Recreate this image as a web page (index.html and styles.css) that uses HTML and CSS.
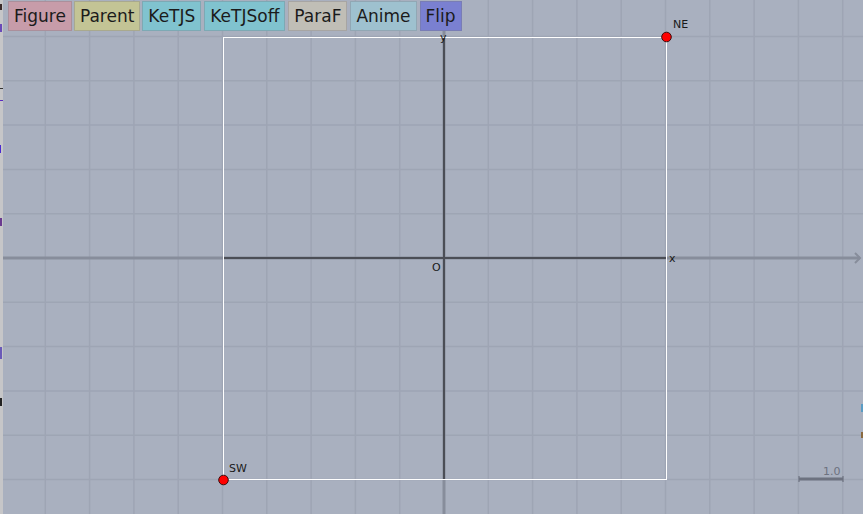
FILE: index.html
```html
<!DOCTYPE html>
<html>
<head>
<meta charset="utf-8">
<link rel="stylesheet" href="styles.css">
</head>
<body>
<div class="page">
  <div class="edge">
    <span class="frag f1"></span>
    <span class="frag f2"></span>
    <span class="frag f3"></span>
    <span class="frag f4"></span>
    <span class="frag f5"></span>
    <span class="frag f6"></span>
    <span class="frag f7"></span>
    <span class="frag f8"></span>
  </div>
  <div class="stage">
    <svg class="board" width="860" height="514" viewBox="3 0 860 514" xmlns="http://www.w3.org/2000/svg">
      <rect x="3" y="0" width="860" height="514" fill="#a9b0bf"/>
      <g stroke="#9ea5b4" stroke-width="1.5">
        <line x1="45.3" y1="0" x2="45.3" y2="514"/>
        <line x1="89.6" y1="0" x2="89.6" y2="514"/>
        <line x1="133.9" y1="0" x2="133.9" y2="514"/>
        <line x1="178.2" y1="0" x2="178.2" y2="514"/>
        <line x1="222.5" y1="0" x2="222.5" y2="514"/>
        <line x1="266.8" y1="0" x2="266.8" y2="514"/>
        <line x1="311.1" y1="0" x2="311.1" y2="514"/>
        <line x1="355.4" y1="0" x2="355.4" y2="514"/>
        <line x1="399.7" y1="0" x2="399.7" y2="514"/>
        <line x1="488.3" y1="0" x2="488.3" y2="514"/>
        <line x1="532.6" y1="0" x2="532.6" y2="514"/>
        <line x1="576.9" y1="0" x2="576.9" y2="514"/>
        <line x1="621.2" y1="0" x2="621.2" y2="514"/>
        <line x1="665.5" y1="0" x2="665.5" y2="514"/>
        <line x1="709.8" y1="0" x2="709.8" y2="514"/>
        <line x1="754.1" y1="0" x2="754.1" y2="514"/>
        <line x1="798.4" y1="0" x2="798.4" y2="514"/>
        <line x1="842.7" y1="0" x2="842.7" y2="514"/>
        <line x1="3" y1="36.5" x2="863" y2="36.5"/>
        <line x1="3" y1="80.8" x2="863" y2="80.8"/>
        <line x1="3" y1="125.1" x2="863" y2="125.1"/>
        <line x1="3" y1="169.4" x2="863" y2="169.4"/>
        <line x1="3" y1="213.7" x2="863" y2="213.7"/>
        <line x1="3" y1="302.3" x2="863" y2="302.3"/>
        <line x1="3" y1="346.6" x2="863" y2="346.6"/>
        <line x1="3" y1="390.9" x2="863" y2="390.9"/>
        <line x1="3" y1="435.2" x2="863" y2="435.2"/>
        <line x1="3" y1="479.5" x2="863" y2="479.5"/>
      </g>
      <g stroke="#878d9b" stroke-width="3" fill="none">
        <line x1="3" y1="258" x2="860" y2="258"/>
        <line x1="444" y1="514" x2="444" y2="3"/>
        <polyline points="855,253 860,258 855,263" stroke-width="2"/>
        <polyline points="439,8 444,3 449,8" stroke-width="2"/>
      </g>
      <g stroke="#4b4e56" stroke-width="2">
        <line x1="223" y1="258" x2="666" y2="258"/>
        <line x1="444" y1="37" x2="444" y2="480"/>
      </g>
      <rect x="223.5" y="37.5" width="443" height="442" fill="none" stroke="#ffffff" stroke-width="1"/>
      <g class="lbl">
        <text x="432" y="271">O</text>
        <text x="669" y="262">x</text>
        <text x="440" y="41">y</text>
        <text x="673" y="28">NE</text>
        <text x="229" y="472">SW</text>
      </g>
      <circle cx="666.5" cy="37" r="4.8" fill="#ff0000" stroke="#3a1010" stroke-width="1"/>
      <circle cx="223.5" cy="480" r="4.8" fill="#ff0000" stroke="#3a1010" stroke-width="1"/>
      <g stroke="#6d7280">
        <line x1="799" y1="479" x2="843" y2="479" stroke-width="3"/>
        <line x1="799" y1="476" x2="799" y2="482" stroke-width="1.2"/>
        <line x1="843" y1="476" x2="843" y2="482" stroke-width="1.2"/>
      </g>
      <text class="scale" x="823" y="475">1.0</text>
      <rect x="861" y="404" width="2" height="8" fill="#5a9cc4"/>
      <rect x="861" y="432" width="2" height="6" fill="#8a6a40"/>
    </svg>
    <div class="toolbar">
      <button class="btn b-figure">Figure</button>
      <button class="btn b-parent">Parent</button>
      <button class="btn b-ketjs">KeTJS</button>
      <button class="btn b-ketjsoff">KeTJSoff</button>
      <button class="btn b-paraf">ParaF</button>
      <button class="btn b-anime">Anime</button>
      <button class="btn b-flip">Flip</button>
    </div>
  </div>
</div>
</body>
</html>
```

FILE: styles.css
```css
html, body {
  margin: 0;
  padding: 0;
  background: #ffffff;
  width: 863px;
  height: 518px;
  overflow: hidden;
}

.page {
  display: flex;
  flex-direction: row;
  align-items: flex-start;
}

.edge {
  position: relative;
  width: 3px;
  height: 514px;
  background: #c6c6c8;
  flex: none;
}

.frag {
  position: absolute;
  left: 0;
  display: block;
  width: 3px;
  height: 1px;
  background: #5a2aa8;
}

.f1 { top: 4px; height: 6px; background: #3a2a2a; width: 2px; }
.f2 { top: 24px; height: 8px; background: #6a4ab8; width: 2px; }
.f3 { top: 88px; background: #333; }
.f4 { top: 100px; background: #5a2ac0; }
.f5 { top: 145px; height: 8px; width: 1px; background: #4a2ad0; }
.f6 { top: 218px; height: 8px; width: 2px; background: #6a3a90; }
.f7 { top: 347px; height: 12px; width: 2px; background: #6a5ab8; }
.f8 { top: 398px; height: 8px; width: 2px; background: #222222; }

.stage {
  position: relative;
  width: 860px;
  height: 514px;
  flex: none;
}

.board {
  display: block;
}

.lbl text {
  font-family: "DejaVu Sans", sans-serif;
  font-size: 11px;
  fill: #1a1a1a;
}

.scale {
  font-family: "DejaVu Sans", sans-serif;
  font-size: 11px;
  fill: #6d7280;
}

.toolbar {
  position: absolute;
  left: 5px;
  top: 1px;
  display: flex;
  flex-direction: row;
  gap: 2px;
}

.btn {
  height: 30px;
  margin: 0;
  padding: 0 5px;
  border: 1px solid rgba(120, 120, 130, 0.35);
  border-radius: 0;
  font-family: "DejaVu Sans", sans-serif;
  font-size: 17px;
  line-height: 28px;
  color: #1b1b1b;
  cursor: pointer;
}

.b-figure { background: #c79ca9; }
.b-parent { background: #c3c495; }
.b-ketjs { background: #80c3cf; }
.b-ketjsoff { background: #80c3cf; margin-left: 1px; }
.b-paraf { background: #c0beb6; margin-left: 1px; }
.b-anime { background: #9ec1cf; margin-left: 1px; }
.b-flip { background: #7a80d1; margin-left: 1px; }
```
